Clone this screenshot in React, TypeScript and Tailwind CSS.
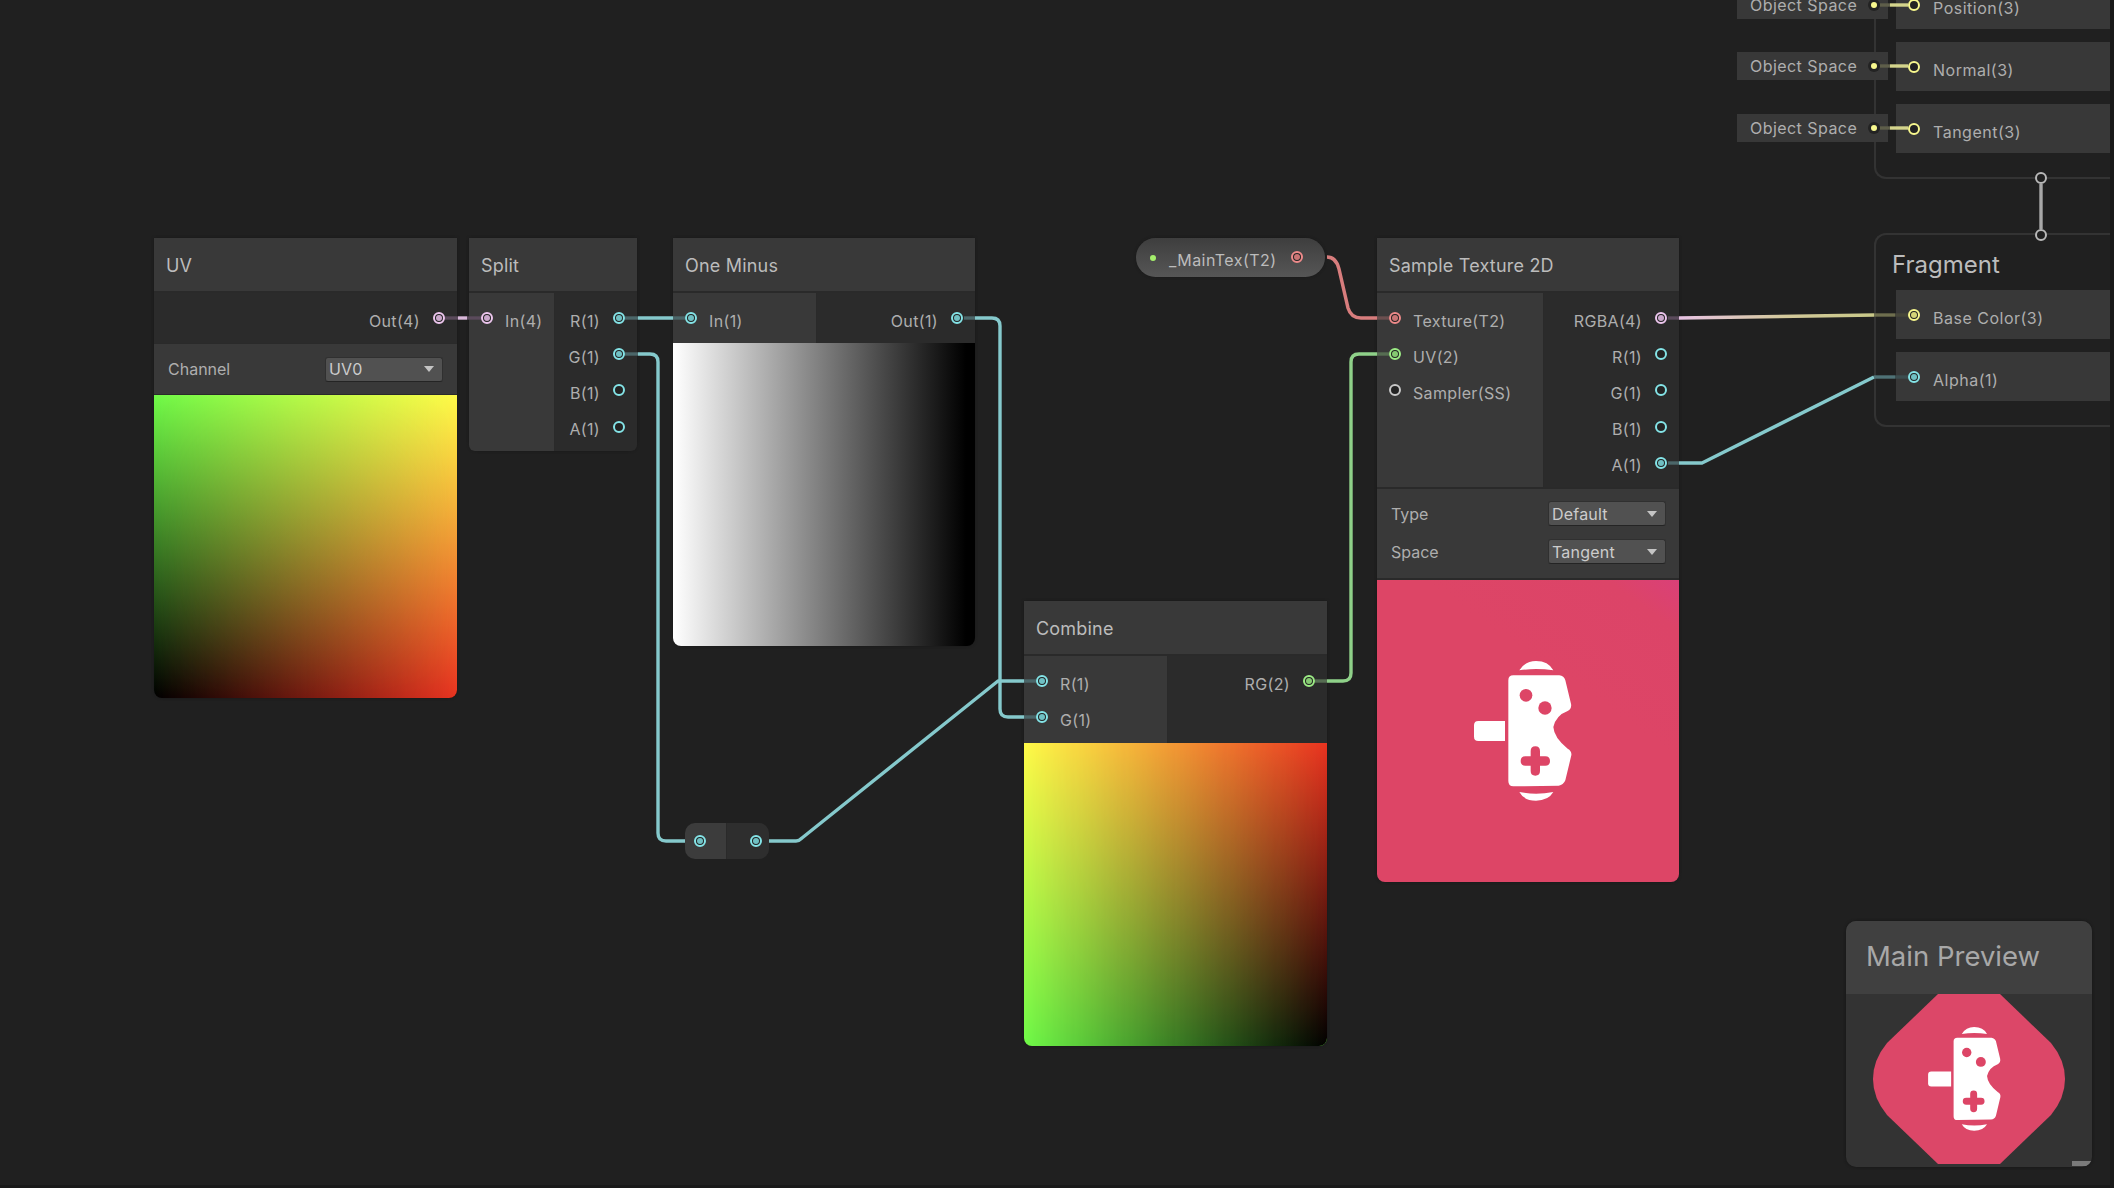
import type { ReactNode } from "react";

const font = "font-['Inter','Noto_Sans',sans-serif]";

type PortColor = "pink" | "cyan" | "green" | "salmon" | "yellow" | "gray";

const ringColors: Record<PortColor, string> = {
  pink: "border-[#edc6ee]",
  cyan: "border-[#84e4e7]",
  green: "border-[#9cec85]",
  salmon: "border-[#ee8a8a]",
  yellow: "border-[#f8f88e]",
  gray: "border-[#c8c8c8]",
};

const dotColors: Record<PortColor, string> = {
  pink: "bg-[#c9a6ca]",
  cyan: "bg-[#6fc0c3]",
  green: "bg-[#85c971]",
  salmon: "bg-[#c97474]",
  yellow: "bg-[#d4d478]",
  gray: "bg-[#aaaaaa]",
};

function Port({ color, connected }: { color: PortColor; connected?: boolean }) {
  return (
    <span
      className={`flex h-3 w-3 shrink-0 items-center justify-center rounded-full border-2 bg-[#232323] ${ringColors[color]}`}
    >
      {connected && <span className={`h-1.5 w-1.5 rounded-full ${dotColors[color]}`} />}
    </span>
  );
}

type PortDef = { label: string; color: PortColor; connected?: boolean };

function InputRow({ label, color, connected }: PortDef) {
  return (
    <div className="flex h-[36.2px] items-center gap-3 pl-3">
      <Port color={color} connected={connected} />
      <span className="mt-[5px] whitespace-nowrap text-[16px] tracking-[0.35px] text-[#aeaeae]">{label}</span>
    </div>
  );
}

function OutputRow({ label, color, connected }: PortDef) {
  return (
    <div className="flex h-[36.2px] items-center justify-end gap-[13px] pr-3">
      <span className="mt-[5px] whitespace-nowrap text-[16px] tracking-[0.35px] text-[#aeaeae]">{label}</span>
      <Port color={color} connected={connected} />
    </div>
  );
}

function Dropdown({ value, className }: { value: string; className: string }) {
  return (
    <div
      className={`flex h-[25px] items-center justify-between rounded-[3px] border border-[#303030] border-b-[#242424] bg-[#515151] pl-[3px] pr-2 text-[16px] tracking-[0.2px] text-[#cccccc] ${className}`}
    >
      <span>{value}</span>
      <span className="h-0 w-0 border-x-[5px] border-t-[6px] border-x-transparent border-t-[#c4c4c4]" />
    </div>
  );
}

function Node({
  title,
  className,
  children,
}: {
  title: string;
  className: string;
  children: ReactNode;
}) {
  return (
    <div className={`absolute top-[238px] flex flex-col rounded-b-lg shadow-[0_0_3px_#191919] ${className}`}>
      <div className="flex h-[55px] shrink-0 items-center border-b-2 border-[#2a2a2a] bg-[#393939] pl-3 pt-0.5 text-[18px] tracking-[0.2px] text-[#bcbcbc]">
        {title}
      </div>
      {children}
    </div>
  );
}

function Ports({
  inputs,
  outputs,
  inputWidth,
  pad,
}: {
  inputs: PortDef[];
  outputs: PortDef[];
  inputWidth: string;
  pad: string;
}) {
  return (
    <div className={`flex ${pad}`}>
      <div className={`bg-[#393939] pt-[7px] ${inputWidth}`}>
        {inputs.map((p) => (
          <InputRow key={p.label} {...p} />
        ))}
      </div>
      <div className="flex-1 border-l border-[#2a2a2a] bg-[#2b2b2b] pt-[7px]">
        {outputs.map((p) => (
          <OutputRow key={p.label} {...p} />
        ))}
      </div>
    </div>
  );
}

// bilinear blend of four corners: left column underneath, right column masked in
function UvGradient() {
  return (
    <div className="relative h-[303px] overflow-hidden rounded-b-lg bg-[linear-gradient(to_bottom,#70fa48,#000000)]">
      <div className="absolute inset-0 bg-[linear-gradient(to_bottom,#fffa48,#e83320)] [mask-image:linear-gradient(to_right,transparent,black)]" />
    </div>
  );
}

function CombineGradient() {
  return (
    <div className="relative h-[303px] overflow-hidden rounded-b-lg bg-[linear-gradient(to_bottom,#fffa48,#70fa48)]">
      <div className="absolute inset-0 bg-[linear-gradient(to_bottom,#e83320,#000000)] [mask-image:linear-gradient(to_right,transparent,black)]" />
    </div>
  );
}

// controller glyph, traced in a 98x139 box
function GameIcon({ className }: { className: string }) {
  return (
    <svg viewBox="222 122 294 420" className={className}>
      <path
        fill="#ffffff"
        d="M340 165 L478 165 Q492 167 496 180 L513 250 Q516 265 503 272 Q468 285 460 320 Q462 352 503 385 Q516 392 514 405 L496 480 Q490 495 476 496 L340 498 Q325 498 325 482 L325 180 Q325 165 340 165 Z"
      />
      <circle cx="378" cy="225" r="19" fill="#dd4566" />
      <circle cx="435" cy="263" r="20" fill="#dd4566" />
      <path
        fill="#dd4566"
        d="M392 392 Q392 378 406 378 Q420 378 420 392 L420 408 L436 408 Q450 408 450 422 Q450 436 436 436 L420 436 L420 452 Q420 466 406 466 Q392 466 392 452 L392 436 L376 436 Q362 436 362 422 Q362 408 376 408 L392 408 Z"
      />
      <path
        fill="#ffffff"
        d="M315 302 L235 302 Q222 302 222 315 L222 349 Q222 362 235 362 L315 362 Z"
      />
      <path fill="#ffffff" d="M358 150 Q375 122 408 122 Q445 122 460 150 Q408 142 358 150 Z" />
      <path fill="#ffffff" d="M358 515 Q408 525 460 515 Q445 541 408 541 Q372 541 358 515 Z" />
    </svg>
  );
}

function Edges() {
  const cyan = "#85c9cc";
  const dimCyan = "#4b6669";
  return (
    <svg className="pointer-events-none absolute inset-0" width="2114" height="1188" fill="none">
      <defs>
        <linearGradient id="rgbaToBase" gradientUnits="userSpaceOnUse" x1="1679" y1="318" x2="1874" y2="315">
          <stop offset="0" stopColor="#e8c3e4" />
          <stop offset="0.55" stopColor="#d3c99a" />
          <stop offset="1" stopColor="#c8c888" />
        </linearGradient>
      </defs>
      <g strokeWidth="3.4" strokeLinejoin="round" strokeLinecap="butt">
        {/* UV -> Split */}
        <path d="M445 318H458" stroke="#5a4a5b" />
        <path d="M458 318H467" stroke="#d9b8da" />
        <path d="M467 318H481" stroke="#5a4a5b" />
        {/* Split R -> One Minus */}
        <path d="M625 318H638" stroke={dimCyan} />
        <path d="M638 318H673" stroke={cyan} />
        <path d="M673 318H685" stroke={dimCyan} />
        {/* Split G -> reroute */}
        <path d="M625 354H638" stroke={dimCyan} />
        <path d="M638 354H650Q658 354 658 362V833Q658 841 666 841H685" stroke={cyan} />
        {/* reroute -> Combine R */}
        <path d="M769 841H796Q799 841 802 838L998 681H1024" stroke={cyan} />
        <path d="M1024 681H1036" stroke={dimCyan} />
        {/* One Minus Out -> Combine G */}
        <path d="M964 318H975" stroke={dimCyan} />
        <path d="M975 318H992Q1000 318 1000 326V709Q1000 717 1008 717H1024" stroke={cyan} />
        <path d="M1024 717H1036" stroke={dimCyan} />
        {/* Combine RG -> UV */}
        <path d="M1315 681H1327" stroke="#566d52" />
        <path d="M1327 681H1343Q1351 681 1351 673V362Q1351 354 1359 354H1377" stroke="#8fd189" />
        <path d="M1377 354H1389" stroke="#566d52" />
        {/* _MainTex -> Texture */}
        <path d="M1327 257Q1336 257 1339 269L1348 308Q1351 318 1361 318H1377" stroke="#d87d7d" />
        <path d="M1377 318H1389" stroke="#6b4f4f" />
        {/* RGBA -> Base Color */}
        <path d="M1668 318H1679" stroke="#5a4a5b" />
        <path d="M1679 318L1874 315" stroke="url(#rgbaToBase)" />
        <path d="M1874 315H1895" stroke="#6e6e4e" />
        <path d="M1895 315H1908" stroke="#45453a" />
        {/* A -> Alpha */}
        <path d="M1668 463H1679" stroke={dimCyan} />
        <path d="M1679 463H1702L1874 377" stroke={cyan} />
        <path d="M1874 377H1895" stroke="#4f7276" />
        <path d="M1895 377H1908" stroke="#3c4d4f" />
        {/* Object Space -> vertex ports */}
        {[5, 66, 128].map((y) => (
          <g key={y}>
            <path d={`M1880 ${y}H1890`} stroke="#5e5e4a" />
            <path d={`M1890 ${y}H1908`} stroke="#d4d48c" />
          </g>
        ))}
        {/* Flow connector */}
        <path d="M2041 184V229" stroke="#a8a8a8" />
      </g>
    </svg>
  );
}

function ContextRow({
  label,
  color,
  connected,
  className,
}: PortDef & { className: string }) {
  return (
    <div
      className={`absolute left-[1896px] flex w-[214px] items-center gap-[13px] bg-[#383838] pl-3 ${className}`}
    >
      <Port color={color} connected={connected} />
      <span className="mt-[7px] text-[16px] tracking-[0.5px] text-[#aeaeae]">{label}</span>
    </div>
  );
}

function ObjectSpace({ className }: { className: string }) {
  return (
    <div
      className={`absolute left-[1737px] flex h-7 w-[151px] items-center justify-between bg-[#383838] pl-[13px] pr-2 text-[16px] tracking-[0.45px] text-[#aeaeae] ${className}`}
    >
      <span>Object Space</span>
      <span className="flex h-3 w-3 items-center justify-center rounded-full bg-[#232323]">
        <span className="h-1.5 w-1.5 rounded-full bg-[#f8f88e]" />
      </span>
    </div>
  );
}

export default function App() {
  return (
    <div className={`relative h-[1188px] w-[2114px] overflow-hidden bg-[#191919] ${font}`}>
      <div className="absolute left-0 top-0 h-[1185px] w-[2110px] overflow-hidden bg-[#202020]">
        {/* Vertex / Fragment contexts */}
        <div className="absolute -top-2.5 left-[1874px] h-[189px] w-[236px] rounded-bl-xl border-b-2 border-l-2 border-[#333333]" />
        <div className="absolute left-[1874px] top-[233px] h-[194px] w-[236px] rounded-l-xl border-y-2 border-l-2 border-[#333333]">
          <span className="absolute left-4 top-[12px] text-[24px] text-[#bcbcbc]">Fragment</span>
        </div>
        <ContextRow label="Position(3)" color="yellow" className="-top-5 h-[49px]" />
        <ContextRow label="Normal(3)" color="yellow" className="top-[42px] h-[49px]" />
        <ContextRow label="Tangent(3)" color="yellow" className="top-[104px] h-[49px]" />
        <ContextRow label="Base Color(3)" color="yellow" connected className="top-[290px] h-[49px]" />
        <ContextRow label="Alpha(1)" color="cyan" connected className="top-[352px] h-[49px]" />
        <ObjectSpace className="-top-[9px]" />
        <ObjectSpace className="top-[52px]" />
        <ObjectSpace className="top-[114px]" />
        <span className="absolute left-[2035px] top-[172px] h-3 w-3 rounded-full border-2 border-[#b8b8b8] bg-[#202020]" />
        <span className="absolute left-[2035px] top-[229px] h-3 w-3 rounded-full border-2 border-[#b8b8b8] bg-[#202020]" />

        {/* UV */}
        <Node title="UV" className="left-[154px] w-[303px]">
          <div className="bg-[#2b2b2b] pb-[7px] pt-[7px]">
            <OutputRow label="Out(4)" color="pink" connected />
          </div>
          <div className="flex h-[52px] items-center justify-between border-y border-[#2a2a2a] bg-[#393939] pl-[14px] pr-[14px] text-[16px] text-[#aeaeae]">
            <span>Channel</span>
            <Dropdown value="UV0" className="w-[118px]" />
          </div>
          <UvGradient />
        </Node>

        {/* Split */}
        <Node title="Split" className="left-[469px] w-[168px]">
          <Ports
            inputs={[{ label: "In(4)", color: "pink", connected: true }]}
            outputs={[
              { label: "R(1)", color: "cyan", connected: true },
              { label: "G(1)", color: "cyan", connected: true },
              { label: "B(1)", color: "cyan" },
              { label: "A(1)", color: "cyan" },
            ]}
            inputWidth="w-[85px]"
            pad="h-[158px] overflow-hidden rounded-b-md"
          />
        </Node>

        {/* One Minus */}
        <Node title="One Minus" className="left-[673px] w-[302px]">
          <Ports
            inputs={[{ label: "In(1)", color: "cyan", connected: true }]}
            outputs={[{ label: "Out(1)", color: "cyan", connected: true }]}
            inputWidth="w-[143px]"
            pad="h-[50px]"
          />
          <div className="h-[303px] rounded-b-lg bg-[linear-gradient(to_right,#ffffff,#000000_97%)]" />
        </Node>

        {/* Combine */}
        <Node title="Combine" className="left-[1024px] top-[601px] w-[303px]">
          <Ports
            inputs={[
              { label: "R(1)", color: "cyan", connected: true },
              { label: "G(1)", color: "cyan", connected: true },
            ]}
            outputs={[{ label: "RG(2)", color: "green", connected: true }]}
            inputWidth="w-[143px]"
            pad="h-[87px]"
          />
          <CombineGradient />
        </Node>

        {/* Sample Texture 2D */}
        <Node title="Sample Texture 2D" className="left-[1377px] w-[302px]">
          <Ports
            inputs={[
              { label: "Texture(T2)", color: "salmon", connected: true },
              { label: "UV(2)", color: "green", connected: true },
              { label: "Sampler(SS)", color: "gray" },
            ]}
            outputs={[
              { label: "RGBA(4)", color: "pink", connected: true },
              { label: "R(1)", color: "cyan" },
              { label: "G(1)", color: "cyan" },
              { label: "B(1)", color: "cyan" },
              { label: "A(1)", color: "cyan", connected: true },
            ]}
            inputWidth="w-[166px]"
            pad="h-[194px]"
          />
          <div className="flex h-[93px] flex-col justify-center gap-[13px] border-y-2 border-[#2a2a2a] bg-[#393939] pb-0.5 pl-[14px] pr-[13px] text-[16px] text-[#aeaeae]">
            <div className="flex items-center justify-between">
              <span>Type</span>
              <Dropdown value="Default" className="w-[118px]" />
            </div>
            <div className="flex items-center justify-between">
              <span>Space</span>
              <Dropdown value="Tangent" className="w-[118px]" />
            </div>
          </div>
          <div className="flex h-[302px] items-center rounded-b-lg bg-[linear-gradient(215deg,#da4078,#dc4468_10%,#dd4566_35%)] pl-[97px]">
            <GameIcon className="h-[140px] w-[98px]" />
          </div>
        </Node>

        {/* _MainTex property */}
        <div className="absolute left-[1136px] top-[238px] flex h-[39px] w-[189px] items-center rounded-[20px] bg-[linear-gradient(to_bottom,#3e3e3e,#565656)] pl-[14px] shadow-[0_0_3px_#191919]">
          <span className="h-1.5 w-1.5 rounded-full bg-[#a4ee6c]" />
          <span className="ml-[13px] mt-1 text-[16px] tracking-[0.45px] text-[#bcbcbc]">_MainTex(T2)</span>
          <span className="-mt-px ml-[15px]">
            <Port color="salmon" connected />
          </span>
        </div>

        {/* Redirect node */}
        <div className="absolute left-[685px] top-[823px] flex h-9 w-[84px] overflow-hidden rounded-[10px]">
          <div className="flex w-[42px] items-center justify-start border-r border-[#2a2a2a] bg-[#3c3c3c] pl-[9px]">
            <Port color="cyan" connected />
          </div>
          <div className="flex w-[42px] items-center justify-end bg-[#2e2e2e] pr-[7px]">
            <Port color="cyan" connected />
          </div>
        </div>

        {/* Main Preview */}
        <div className="absolute left-[1846px] top-[921px] flex h-[246px] w-[246px] flex-col overflow-hidden rounded-[10px] bg-[#333333] shadow-[0_0_3px_#151515]">
          <div className="flex h-[73px] shrink-0 items-center bg-[#404040] pb-0.5 pl-5 text-[27.5px] text-[#a8a8a8]">
            Main Preview
          </div>
          <div className="relative flex-1">
            <svg className="absolute left-[27px] top-0" width="192" height="170" viewBox="0 0 192 170">
              <path
                fill="#dc4768"
                d="M65 0H127L178 49Q192 66 192 85Q192 104 178 121L127 170H65L14 121Q0 104 0 85Q0 66 14 49Z"
              />
            </svg>
            <GameIcon className="absolute left-[82px] top-[33px] h-[104px] w-[73px]" />
            <span className="absolute bottom-px right-0 h-[5px] w-5 bg-[#7a7a7a]" />
          </div>
        </div>

        <Edges />
      </div>
    </div>
  );
}
